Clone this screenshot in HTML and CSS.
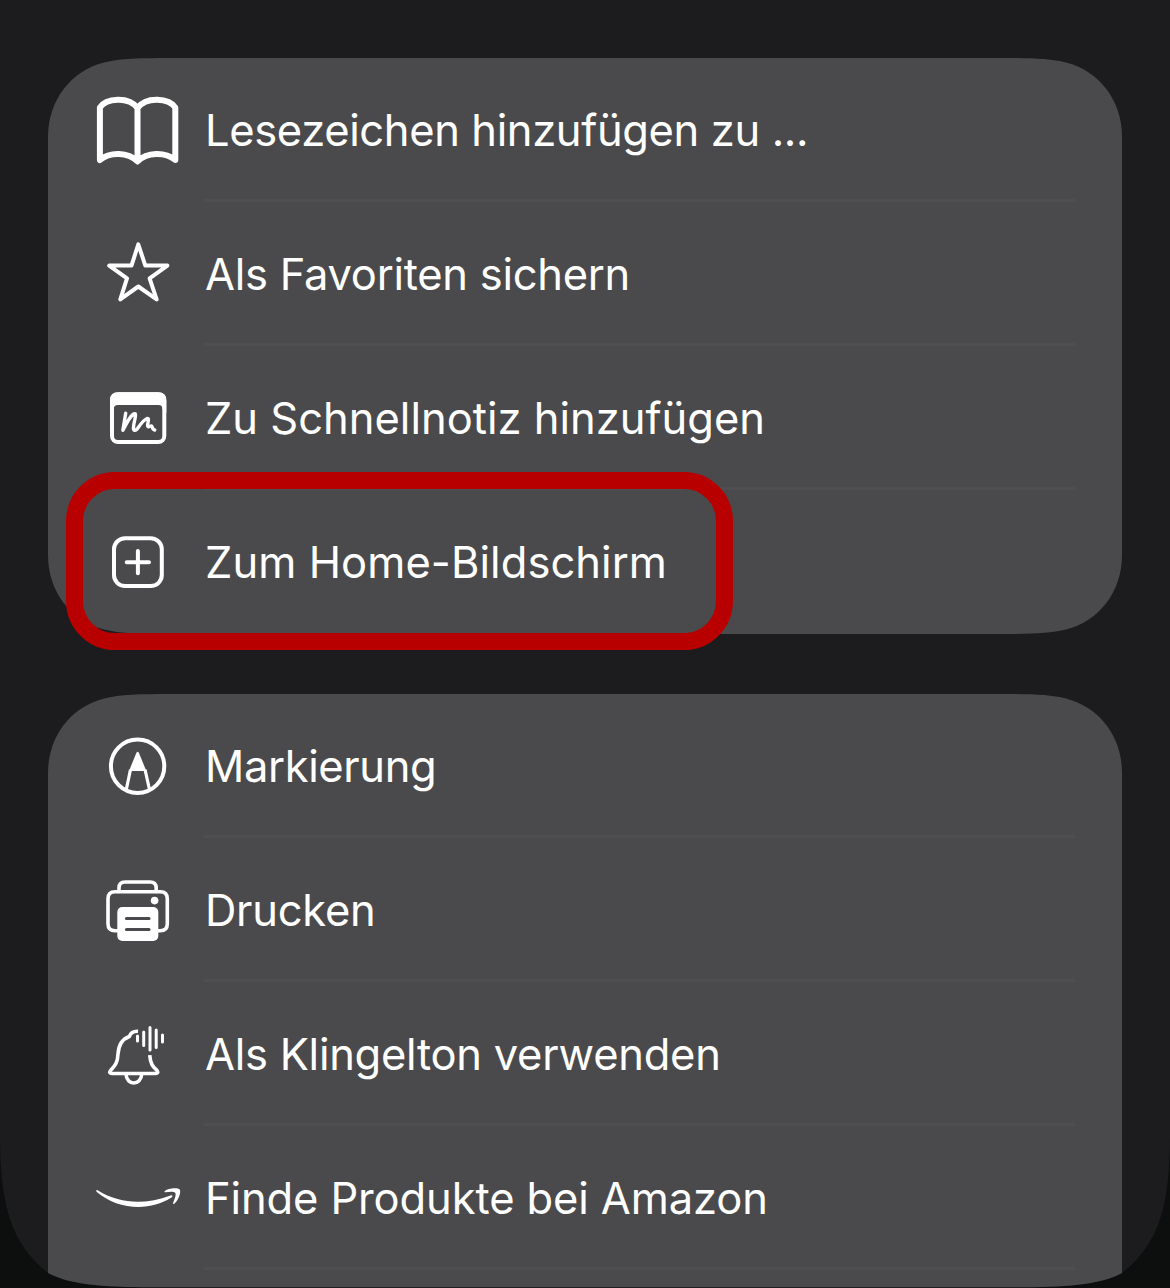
FILE: index.html
```html
<!DOCTYPE html>
<html lang="de">
<head>
<meta charset="utf-8">
<title>Teilen</title>
<link rel="stylesheet" href="styles.css">
</head>
<body>
<main class="sheet">
  <ul class="card card-full">
    <li class="row">
      <svg class="icon" viewBox="90 82 96 96"><path stroke-width="6" d="M99.900 160V107.500C106 97.700 129 96.200 137.500 108C146 96.200 169 97.700 175.300 107.500V160C165 151.700 147 152 137.500 161.500C128 152 110 151.700 99.900 160ZM137.500 108V161"/></svg>
      <span class="label tight">Lesezeichen hinzufügen zu ...</span>
    </li>
    <li class="row">
      <svg class="icon" viewBox="90 226 96 96"><path stroke-width="4" d="M138.300 244.300L145.300 265.600H167.400L149.600 278.400L156.600 299.400L138.300 286.500L120.300 299.400L127 278.400L109.200 265.600H131.500Z"/></svg>
      <span class="label snug">Als Favoriten sichern</span>
    </li>
    <li class="row">
      <svg class="icon" viewBox="90 370 96 96"><rect x="112" y="394.200" width="52.300" height="47.800" rx="6" stroke-width="4"/><path fill="currentColor" stroke="none" d="M110 405V400Q110 392.200 118 392.200H158.300Q166.300 392.200 166.300 400V413L162.500 409Q162.500 405 158.500 405H118Q114 405 113.500 409L110 413Z"/><path stroke-width="3.400" d="M125.700 413.200L122.900 430.300C126 424 130 416.500 133.500 414Q135.800 412.700 135.500 415.500C135.200 420 133 425 133.500 429C134 431 136 430.500 137.500 428.500C141 423.500 144 419.500 147 418.500C150 418 147.200 423.500 147.700 426C148.300 428 150.500 425.300 151.500 426C152.500 426.500 152 429.700 154.700 430"/></svg>
      <span class="label">Zu Schnellnotiz hinzufügen</span>
    </li>
    <li class="row highlighted">
      <svg class="icon" viewBox="90 514 96 96"><rect x="114" y="538.300" width="47.800" height="47.800" rx="11" stroke-width="4"/><path stroke-width="4" d="M126.700 562.200H149M137.900 551V573.300"/></svg>
      <span class="label wide">Zum Home-Bildschirm</span>
    </li>
  </ul>
  <ul class="card card-open">
    <li class="row">
      <svg class="icon" viewBox="90 718 96 96"><circle cx="137.600" cy="766.300" r="26.700" stroke-width="4"/><path stroke-width="3.200" stroke-linecap="butt" d="M126.300 789.500L130.500 769.500M149.500 789.500L145 769.500"/><path fill="currentColor" stroke="none" d="M136.300 753Q137.700 750.500 139 753L146.300 771H129Z"/></svg>
      <span class="label tight">Markierung</span>
    </li>
    <li class="row">
      <svg class="icon" viewBox="90 862 96 96"><path stroke-width="3.600" d="M119 892V888Q119 882 125 882H150Q156.200 882 156.200 888V892M118 930.700H115Q108 930.700 108 923.700V898.700Q108 891.700 115 891.700H160.300Q167.300 891.700 167.300 898.700V923.700Q167.300 930.700 160.300 930.700H157"/><rect x="117.300" y="907" width="41" height="34" rx="5" fill="currentColor" stroke="none"/><circle cx="154.600" cy="900.600" r="3.800" fill="currentColor" stroke="none"/><path class="cut" d="M126.500 918.500H149M126.500 929.500H149"/></svg>
      <span class="label snug">Drucken</span>
    </li>
    <li class="row">
      <svg class="icon" viewBox="90 1006 96 96"><path stroke-width="3.600" stroke-linecap="butt" d="M138 1031.300C133.500 1031 130.500 1033.300 129.300 1036.500C121 1039.500 118.500 1046 118 1054C117.500 1065 113.500 1066.500 110.500 1070.500Q108.500 1073.500 112 1073.500H155.500Q159 1073.500 157 1070.500C153.500 1067 150.500 1065 149.700 1055.200M126 1074C126.500 1086 141 1086 141.800 1074"/><path stroke-width="3" d="M137.500 1036V1041M143.700 1032V1045.500M150 1027.500V1050M156.200 1030V1047.500M162.500 1035V1042"/></svg>
      <span class="label snug">Als Klingelton verwenden</span>
    </li>
    <li class="row">
      <svg class="icon" viewBox="90 1150 96 96"><path fill="currentColor" stroke="none" d="M96.200 1190.300Q97 1189.700 98.500 1190.800C121 1204.500 146 1204.500 170.500 1195.400C172.300 1194.800 173.300 1196.400 171.500 1197.600C149 1212 117 1209.500 96.500 1191.700ZM164.500 1191.500C167 1188.300 177.500 1187.300 179.800 1189.500C181.500 1193 177.500 1201.500 174 1204Q172.600 1204.500 173.200 1202.600C174.300 1199.500 176.500 1194.500 175.300 1192.900C173.500 1191.300 169 1191.900 165.500 1192.300Q164 1192.500 164.500 1191.500Z"/></svg>
      <span class="label slight">Finde Produkte bei Amazon</span>
    </li>
  </ul>
</main>
</body>
</html>
```
FILE: styles.css
```css
* { box-sizing: border-box; }
body { margin: 0; height: 1288px; overflow: hidden; background: #0d0f0e; }

.sheet {
  height: 1288px;
  padding: 58px 48px 0;
  display: flex;
  flex-direction: column;
  gap: 60px;
  overflow: hidden;
  background: #1c1c1e;
  clip-path: path("M0 0H1170V1135C1170 1210 1157 1245 1122 1273C1098 1286 1060 1287.300 1010 1287.300H160C110 1287.300 72 1286 48 1273C13 1245 0 1210 0 1135Z");
}

.card { flex: none; margin: 0; padding: 0; list-style: none; background: #4a4a4c; }
.card-full {
  height: 576px;
  background: none;
  position: relative;
}
.card-full::before {
  content: "";
  position: absolute;
  inset: 0;
  background: #4a4a4c;
  clip-path: path("M122 0H952C982 0 1002 .5 1018 4.500C1051 13 1074 42 1074 79V497C1074 534 1051 563 1018 571.500C1002 575.500 982 576 952 576H122C92 576 72 575.500 56 571.500C23 563 0 534 0 497V79C0 42 23 13 56 4.500C72 .5 92 0 122 0Z");
}
.card-open {
  height: 594px;
  clip-path: path("M122 0H952C982 0 1002 .5 1018 4.500C1051 13 1074 42 1074 79V594H0V79C0 42 23 13 56 4.500C72 .5 92 0 122 0Z");
}

.row {
  position: relative;
  height: 144px;
  padding-left: 42px;
  display: flex;
  align-items: center;
  gap: 19px;
}
.row:not(.highlighted)::after {
  content: "";
  position: absolute;
  left: 156px;
  right: 47px;
  bottom: 0;
  height: 3px;
  background: #4f4f51;
}
.highlighted::before {
  content: "";
  box-sizing: border-box;
  position: absolute;
  left: 17.500px;
  top: -18.500px;
  width: 667px;
  height: 178px;
  border: 17px solid #b90000;
  border-radius: 49px;
}

.icon {
  flex: none;
  width: 96px;
  height: 96px;
  color: #fff;
  fill: none;
  stroke: currentColor;
  stroke-linecap: round;
  stroke-linejoin: round;
}
.cut { stroke: #4a4a4c; stroke-width: 3.2; }

.label {
  font: 400 43.500px/54px Inter, "Liberation Sans", sans-serif;
  color: #fff;
  white-space: nowrap;
}
.tight { letter-spacing: -.37px; }
.snug { letter-spacing: -.27px; }
.slight { letter-spacing: -.12px; }
.wide { letter-spacing: .07px; }
```
